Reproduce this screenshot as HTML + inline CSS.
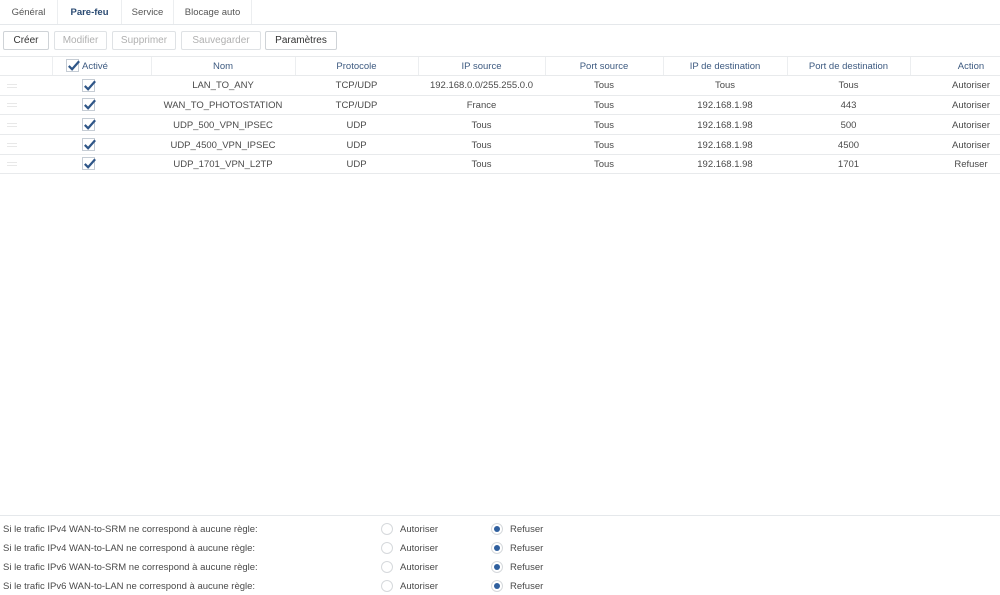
<!DOCTYPE html>
<html><head><meta charset="utf-8"><style>
*{margin:0;padding:0;box-sizing:border-box}
body{width:1000px;height:595px;background:#fff;font-family:"Liberation Sans",sans-serif;font-size:9.5px;color:#4a4a4a;position:relative;overflow:hidden}
.a{position:absolute;white-space:nowrap}
.tab{position:absolute;top:0;height:24px;line-height:26px;text-align:center;color:#555;border-right:1px solid #eceef0}
.btn{position:absolute;top:31px;height:19px;border:1px solid #cfd3d7;border-radius:2px;line-height:17px;text-align:center;color:#333;font-size:10px;background:#fff}
.dis{color:#b0b0b0;border-color:#dfe2e5}
.hline{position:absolute;left:0;width:1000px;height:1px;background:#e8eaec}
.c{position:absolute;text-align:center;white-space:nowrap}
.h{color:#3d5a80}
.cb{position:absolute;width:13px;height:13px;border:1px solid #c5ccd4;background:#fff}
.cb svg{position:absolute;left:-1px;top:-2px}
.grip{position:absolute;left:7px;width:10px;height:4px;border-top:1px solid #e8e8e8;border-bottom:1px solid #e8e8e8}
.r{position:absolute;width:12px;height:12px;border-radius:50%;border:1px solid #d6d9dc;background:#fff}
.r.on::after{content:"";position:absolute;left:2px;top:2px;width:6px;height:6px;border-radius:50%;background:#2f5f9e}
</style></head><body>
<div class="tab" style="left:0;width:58px">Général</div>
<div class="tab" style="left:58px;width:64px;color:#2a4a72;font-weight:bold">Pare-feu</div>
<div class="tab" style="left:122px;width:52px">Service</div>
<div class="tab" style="left:174px;width:78px">Blocage auto</div>
<div class="hline" style="top:24px;background:#e5e8eb"></div>

<div class="btn" style="left:3px;width:46px">Créer</div>
<div class="btn dis" style="left:54px;width:53px">Modifier</div>
<div class="btn dis" style="left:112px;width:64px">Supprimer</div>
<div class="btn dis" style="left:181px;width:80px">Sauvegarder</div>
<div class="btn" style="left:265px;width:72px">Paramètres</div>

<div class="hline" style="top:56px"></div>
<div class="hline" style="top:75px"></div>
<div class="hline" style="top:95px"></div>
<div class="hline" style="top:114px"></div>
<div class="hline" style="top:134px"></div>
<div class="hline" style="top:154px"></div>
<div class="hline" style="top:173px"></div>
<div class="a" style="left:52px;top:57px;width:1px;height:18px;background:#eceef0"></div>
<div class="a" style="left:151px;top:57px;width:1px;height:18px;background:#eceef0"></div>
<div class="a" style="left:295px;top:57px;width:1px;height:18px;background:#eceef0"></div>
<div class="a" style="left:418px;top:57px;width:1px;height:18px;background:#eceef0"></div>
<div class="a" style="left:545px;top:57px;width:1px;height:18px;background:#eceef0"></div>
<div class="a" style="left:663px;top:57px;width:1px;height:18px;background:#eceef0"></div>
<div class="a" style="left:787px;top:57px;width:1px;height:18px;background:#eceef0"></div>
<div class="a" style="left:910px;top:57px;width:1px;height:18px;background:#eceef0"></div>

<div class="cb" style="left:66px;top:59px"><svg width="15" height="15" viewBox="0 0 16 16"><path d="M3 8.5l3.5 3.5L14 3.5" fill="none" stroke="#2f5688" stroke-width="2.4"/></svg></div>
<div class="a h" style="left:82px;top:61px">Activé</div>
<div class="c h" style="left:151px;width:144px;top:61px">Nom</div>
<div class="c h" style="left:295px;width:123px;top:61px">Protocole</div>
<div class="c h" style="left:418px;width:127px;top:61px">IP source</div>
<div class="c h" style="left:545px;width:118px;top:61px">Port source</div>
<div class="c h" style="left:663px;width:124px;top:61px">IP de destination</div>
<div class="c h" style="left:787px;width:123px;top:61px">Port de destination</div>
<div class="c h" style="left:940px;width:62px;top:61px">Action</div>

<div class="grip" style="top:84px"></div><div class="cb" style="left:82px;top:79px"><svg width="15" height="15" viewBox="0 0 16 16"><path d="M3 8.5l3.5 3.5L14 3.5" fill="none" stroke="#2f5688" stroke-width="2.4"/></svg></div>
<div class="c" style="left:151px;width:144px;top:80px">LAN_TO_ANY</div><div class="c" style="left:295px;width:123px;top:80px">TCP/UDP</div><div class="c" style="left:418px;width:127px;top:80px">192.168.0.0/255.255.0.0</div><div class="c" style="left:545px;width:118px;top:80px">Tous</div><div class="c" style="left:663px;width:124px;top:80px">Tous</div><div class="c" style="left:787px;width:123px;top:80px">Tous</div><div class="c" style="left:940px;width:62px;top:80px">Autoriser</div>

<div class="grip" style="top:103px"></div><div class="cb" style="left:82px;top:98px"><svg width="15" height="15" viewBox="0 0 16 16"><path d="M3 8.5l3.5 3.5L14 3.5" fill="none" stroke="#2f5688" stroke-width="2.4"/></svg></div>
<div class="c" style="left:151px;width:144px;top:100px">WAN_TO_PHOTOSTATION</div><div class="c" style="left:295px;width:123px;top:100px">TCP/UDP</div><div class="c" style="left:418px;width:127px;top:100px">France</div><div class="c" style="left:545px;width:118px;top:100px">Tous</div><div class="c" style="left:663px;width:124px;top:100px">192.168.1.98</div><div class="c" style="left:787px;width:123px;top:100px">443</div><div class="c" style="left:940px;width:62px;top:100px">Autoriser</div>

<div class="grip" style="top:123px"></div><div class="cb" style="left:82px;top:118px"><svg width="15" height="15" viewBox="0 0 16 16"><path d="M3 8.5l3.5 3.5L14 3.5" fill="none" stroke="#2f5688" stroke-width="2.4"/></svg></div>
<div class="c" style="left:151px;width:144px;top:120px">UDP_500_VPN_IPSEC</div><div class="c" style="left:295px;width:123px;top:120px">UDP</div><div class="c" style="left:418px;width:127px;top:120px">Tous</div><div class="c" style="left:545px;width:118px;top:120px">Tous</div><div class="c" style="left:663px;width:124px;top:120px">192.168.1.98</div><div class="c" style="left:787px;width:123px;top:120px">500</div><div class="c" style="left:940px;width:62px;top:120px">Autoriser</div>

<div class="grip" style="top:143px"></div><div class="cb" style="left:82px;top:138px"><svg width="15" height="15" viewBox="0 0 16 16"><path d="M3 8.5l3.5 3.5L14 3.5" fill="none" stroke="#2f5688" stroke-width="2.4"/></svg></div>
<div class="c" style="left:151px;width:144px;top:140px">UDP_4500_VPN_IPSEC</div><div class="c" style="left:295px;width:123px;top:140px">UDP</div><div class="c" style="left:418px;width:127px;top:140px">Tous</div><div class="c" style="left:545px;width:118px;top:140px">Tous</div><div class="c" style="left:663px;width:124px;top:140px">192.168.1.98</div><div class="c" style="left:787px;width:123px;top:140px">4500</div><div class="c" style="left:940px;width:62px;top:140px">Autoriser</div>

<div class="grip" style="top:162px"></div><div class="cb" style="left:82px;top:157px"><svg width="15" height="15" viewBox="0 0 16 16"><path d="M3 8.5l3.5 3.5L14 3.5" fill="none" stroke="#2f5688" stroke-width="2.4"/></svg></div>
<div class="c" style="left:151px;width:144px;top:159px">UDP_1701_VPN_L2TP</div><div class="c" style="left:295px;width:123px;top:159px">UDP</div><div class="c" style="left:418px;width:127px;top:159px">Tous</div><div class="c" style="left:545px;width:118px;top:159px">Tous</div><div class="c" style="left:663px;width:124px;top:159px">192.168.1.98</div><div class="c" style="left:787px;width:123px;top:159px">1701</div><div class="c" style="left:940px;width:62px;top:159px">Refuser</div>

<div class="hline" style="top:515px;background:#e5e8eb"></div>

<div class="a" style="left:3px;top:524px">Si le trafic IPv4 WAN-to-SRM ne correspond à aucune règle:</div>
<div class="r" style="left:381px;top:523px"></div><div class="a" style="left:400px;top:524px">Autoriser</div>
<div class="r on" style="left:491px;top:523px"></div><div class="a" style="left:510px;top:524px">Refuser</div>

<div class="a" style="left:3px;top:543px">Si le trafic IPv4 WAN-to-LAN ne correspond à aucune règle:</div>
<div class="r" style="left:381px;top:542px"></div><div class="a" style="left:400px;top:543px">Autoriser</div>
<div class="r on" style="left:491px;top:542px"></div><div class="a" style="left:510px;top:543px">Refuser</div>

<div class="a" style="left:3px;top:562px">Si le trafic IPv6 WAN-to-SRM ne correspond à aucune règle:</div>
<div class="r" style="left:381px;top:561px"></div><div class="a" style="left:400px;top:562px">Autoriser</div>
<div class="r on" style="left:491px;top:561px"></div><div class="a" style="left:510px;top:562px">Refuser</div>

<div class="a" style="left:3px;top:581px">Si le trafic IPv6 WAN-to-LAN ne correspond à aucune règle:</div>
<div class="r" style="left:381px;top:580px"></div><div class="a" style="left:400px;top:581px">Autoriser</div>
<div class="r on" style="left:491px;top:580px"></div><div class="a" style="left:510px;top:581px">Refuser</div>
</body></html>
